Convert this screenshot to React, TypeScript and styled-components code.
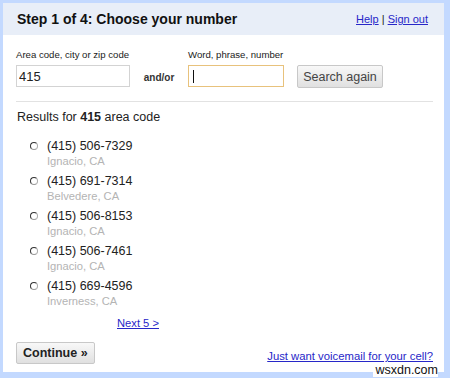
import React from "react";
import styled, { createGlobalStyle } from "styled-components";

const Global = createGlobalStyle`
  html, body { margin: 0; padding: 0; background: #fff; }
  body { font-family: Arial, "Liberation Sans", sans-serif; }
`;

const Frame = styled.div`
  position: relative;
  width: 450px;
  height: 378px;
  box-sizing: border-box;
  background: #c3d9ff;
  padding: 3px 6px 6px 3px;
`;

const Panel = styled.div`
  background: #fff;
  height: 100%;
  display: flex;
  flex-direction: column;
`;

const Header = styled.div`
  height: 32px;
  background: #e8eef8;
  display: flex;
  align-items: center;
  justify-content: space-between;
  padding: 0 16px 0 14px;
`;

const Title = styled.h1`
  margin: 0;
  font-size: 14px;
  font-weight: bold;
  color: #111;
`;

const TopLinks = styled.div`
  font-size: 11px;
  color: #222;
`;

const Link = styled.a`
  color: #2727c8;
  text-decoration: underline;
  cursor: pointer;
`;

const Body = styled.div`
  flex: 1;
  display: flex;
  flex-direction: column;
  padding: 0 11px 0 13px;
`;

const SearchRow = styled.div`
  display: flex;
  align-items: flex-end;
  padding: 15px 0 13px;
  border-bottom: 1px solid #e2e2e2;
`;

const Field = styled.div<{ $w: number }>`
  display: flex;
  flex-direction: column;
  width: ${(p) => p.$w}px;
  margin-bottom: 1px;
`;

const Label = styled.label`
  font-size: 9.6px;
  line-height: 10px;
  color: #222;
  margin-bottom: 5px;
  white-space: nowrap;
`;

const InputWrap = styled.div`
  position: relative;
  display: flex;
`;

const TextInput = styled.input<{ $focus?: boolean }>`
  box-sizing: border-box;
  width: 100%;
  height: 22px;
  border: 1px solid ${(p) => (p.$focus ? "#e8c27c" : "#d3d3d3")};
  padding: 0 2px;
  font-family: Arial, "Liberation Sans", sans-serif;
  font-size: 13px;
  color: #222;
  outline: none;
`;

const Caret = styled.span`
  position: absolute;
  left: 5px;
  top: 5px;
  width: 1px;
  height: 13px;
  background: #111;
`;

const AndOr = styled.span`
  font-size: 10px;
  font-weight: bold;
  color: #333;
  width: 58px;
  text-align: center;
  padding-bottom: 5px;
`;

const Button = styled.button<{ $bold?: boolean }>`
  height: ${(p) => (p.$bold ? 22 : 23)}px;
  padding: 0 ${(p) => (p.$bold ? 6 : 5)}px;
  border: 1px solid #c8c8c8;
  border-radius: 2px;
  background: linear-gradient(#f8f8f8, #e0e0e0);
  font-family: Arial, "Liberation Sans", sans-serif;
  font-size: 12.5px;
  font-weight: ${(p) => (p.$bold ? "bold" : "normal")};
  color: ${(p) => (p.$bold ? "#222" : "#444")};
`;

const SearchButton = styled(Button)`
  margin-left: 13px;
  width: 86px;
`;

const ResultsTitle = styled.div`
  font-size: 12.5px;
  line-height: 15px;
  color: #222;
  margin: 8px 0 0 1px;
`;

const List = styled.div`
  display: flex;
  flex-direction: column;
  margin: 13px 0 0 14px;
  gap: 4px;
`;

const Item = styled.div`
  display: grid;
  grid-template-columns: 17px auto;
`;

const Radio = styled.span`
  box-sizing: border-box;
  width: 8px;
  height: 8px;
  margin-top: 4px;
  border-radius: 50%;
  border: 1.5px solid #333;
  border-right-color: #aaa;
  border-bottom-color: #999;
`;

const Phone = styled.div`
  font-size: 12.5px;
  color: #222;
  line-height: 16px;
`;

const Place = styled.div`
  grid-column: 2;
  font-size: 11.2px;
  color: #b4b4b4;
  line-height: 15px;
`;

const NextRow = styled.div`
  margin: 8px 0 0 101px;
  font-size: 11.2px;
  line-height: 13px;
`;

const Footer = styled.div`
  margin-top: 12px;
  display: flex;
  justify-content: space-between;
  align-items: center;
`;

const VoicemailLink = styled(Link)`
  font-size: 11.3px;
  margin-top: 6px;
`;

const Watermark = styled.span`
  position: absolute;
  right: 12px;
  bottom: 1px;
  font-size: 12.5px;
  color: #111;
  background: #fff;
  line-height: 13px;
  padding-left: 2px;
`;

const results = [
  ["(415) 506-7329", "Ignacio, CA"],
  ["(415) 691-7314", "Belvedere, CA"],
  ["(415) 506-8153", "Ignacio, CA"],
  ["(415) 506-7461", "Ignacio, CA"],
  ["(415) 669-4596", "Inverness, CA"],
];

export default function App() {
  return (
    <>
      <Global />
      <Frame>
        <Panel>
          <Header>
            <Title>Step 1 of 4: Choose your number</Title>
            <TopLinks>
              <Link>Help</Link> | <Link>Sign out</Link>
            </TopLinks>
          </Header>
          <Body>
            <SearchRow>
              <Field $w={114}>
                <Label>Area code, city or zip code</Label>
                <InputWrap>
                  <TextInput defaultValue="415" />
                </InputWrap>
              </Field>
              <AndOr>and/or</AndOr>
              <Field $w={96}>
                <Label>Word, phrase, number</Label>
                <InputWrap>
                  <TextInput $focus />
                  <Caret />
                </InputWrap>
              </Field>
              <SearchButton>Search again</SearchButton>
            </SearchRow>
            <ResultsTitle>
              Results for <b>415</b> area code
            </ResultsTitle>
            <List>
              {results.map(([p, c]) => (
                <Item key={p}>
                  <Radio />
                  <Phone>{p}</Phone>
                  <Place>{c}</Place>
                </Item>
              ))}
            </List>
            <NextRow>
              <Link>Next 5 &gt;</Link>
            </NextRow>
            <Footer>
              <Button $bold>Continue »</Button>
              <VoicemailLink>Just want voicemail for your cell?</VoicemailLink>
            </Footer>
          </Body>
        </Panel>
        <Watermark>wsxdn.com</Watermark>
      </Frame>
    </>
  );
}
